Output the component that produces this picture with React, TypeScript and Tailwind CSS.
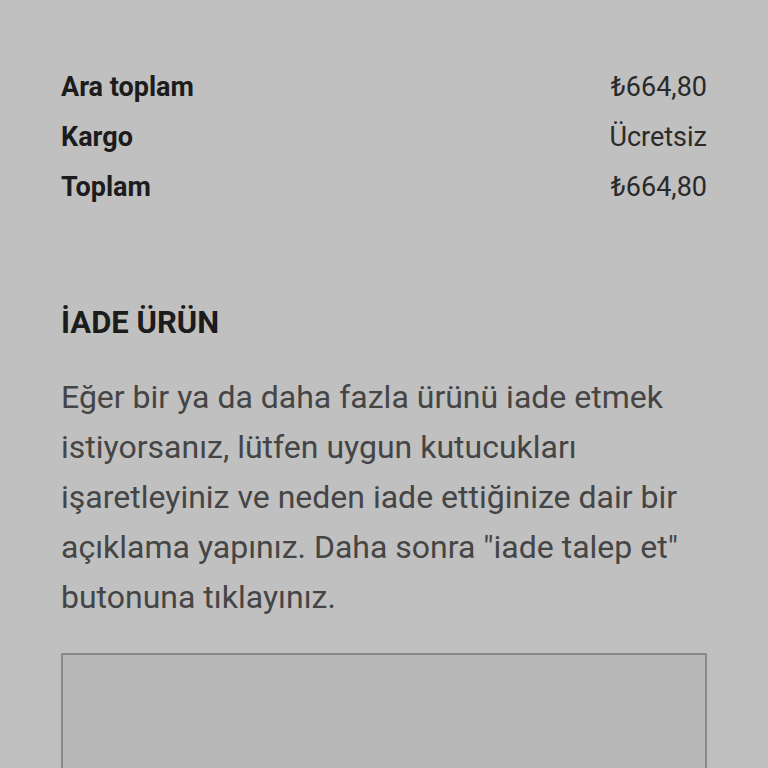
import React from 'react';

const rows = [
  { label: 'Ara toplam', value: '₺664,80' },
  { label: 'Kargo', value: 'Ücretsiz' },
  { label: 'Toplam', value: '₺664,80' },
];

export default function App() {
  return (
    <div className="h-screen overflow-hidden bg-[#c0c0c0] px-[61px] pt-[62px] font-['Roboto',sans-serif]">
      <div className="flex flex-col">
        {rows.map((r, i) => (
          <div key={i} className="flex justify-between items-center h-[50px] text-[27px]">
            <span className="font-bold text-[#1c1c1c]">{r.label}</span>
            <span className="text-[#2a2a2a]">{r.value}</span>
          </div>
        ))}
      </div>

      <h2 className="mt-[93px] text-[31px] leading-[36px] font-bold text-[#1c1c1c]">İADE ÜRÜN</h2>

      <p className="mt-[31px] text-[32px] leading-[50px] text-[#454545]">
        Eğer bir ya da daha fazla ürünü iade etmek istiyorsanız, lütfen uygun kutucukları
        işaretleyiniz ve neden iade ettiğinize dair bir açıklama yapınız. Daha sonra "iade
        talep et" butonuna tıklayınız.
      </p>

      <div className="mt-[31px] h-[200px] border-2 border-[#8a8a8a] bg-[#b8b8b8]" />
    </div>
  );
}
